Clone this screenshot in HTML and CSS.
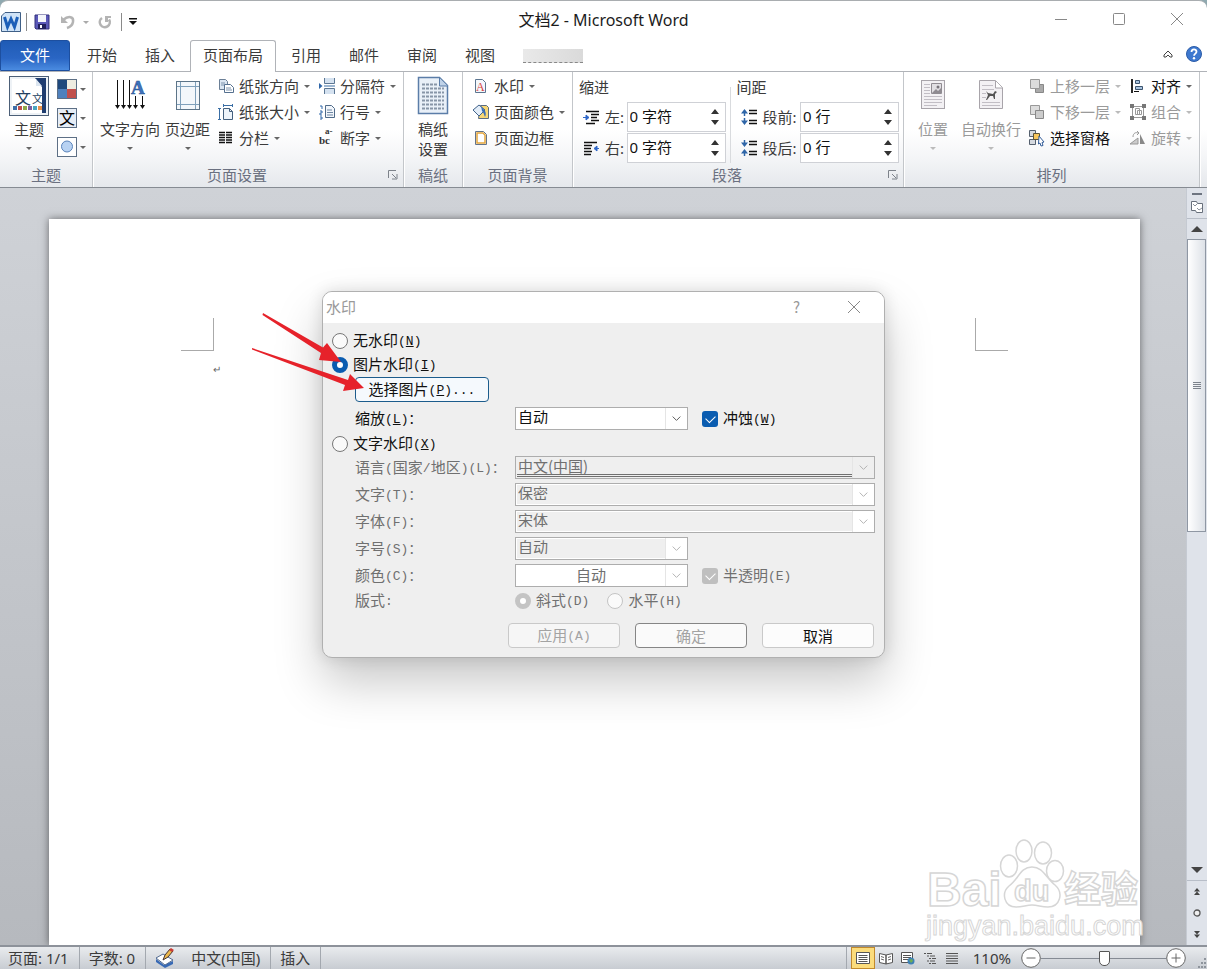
FILE: index.html
```html
<!DOCTYPE html>
<html lang="zh-CN">
<head>
    <meta charset="UTF-8">
    <meta name="viewport" content="width=device-width, initial-scale=1.0">
    <title>文档2 - Microsoft Word</title>
    <link rel="stylesheet" href="styles.css">
</head>
<body>
    <div class="window">
        <header class="titlebar">
            <div class="quick-access">
                <svg class="app-icon" width="20" height="20" viewBox="0 0 20 20"><path d="M4 .5h15.500v19H.5V4z" fill="#cfe3f7" stroke="#3f5f86"/><path d="M3.500 5l3 10L10 7l3.500 8 3-10" fill="none" stroke="#1c5fb8" stroke-width="3"/></svg>
                <span class="bar"></span>
                <button type="button" title="保存"><svg width="16" height="16" viewBox="0 0 16 16"><path d="M1 1h14v14H2l-1-1z" fill="#5a58b8" stroke="#33317c"/><path d="M4 1h8v7H4z" fill="#f4f6fb"/><path d="M4 10h8v5H4z" fill="#20205c"/><path d="M6 11h2v3H6z" fill="#fff"/></svg></button>
                <button type="button" title="撤消" class="undo"><svg width="16" height="16" viewBox="0 0 16 16"><path d="M3 6c6-5 11-3 10 2-.5 3-3 5-6 6" fill="none" stroke="#b4b4b4" stroke-width="2.500"/><path d="M1 2v7h7z" fill="#b4b4b4"/></svg></button>
                <i class="caret dim"></i>
                <button type="button" title="重复" class="redo"><svg width="14" height="14" viewBox="0 0 14 14"><path d="M4 3a5 5 0 1 0 7 1.500" fill="none" stroke="#b4b4b4" stroke-width="2.600"/><path d="M7 1h6v2h-3v4H7z" fill="#b4b4b4"/></svg></button>
                <span class="bar"></span>
                <button type="button" title="自定义快速访问工具栏" class="customize"><svg width="8" height="8" viewBox="0 0 8 8"><path d="M0 0h8v1.500H0zM0 3h8L4 7z" fill="#111"/></svg></button>
            </div>
            <h1>文档2 - Microsoft Word</h1>
            <div class="window-buttons">
                <button type="button" aria-label="最小化"><svg width="14" height="14" viewBox="0 0 14 14"><path d="M1 7.500h12"/></svg></button>
                <button type="button" aria-label="最大化"><svg width="14" height="14" viewBox="0 0 14 14"><rect x="1.500" y="1.500" width="11" height="11" rx="1"/></svg></button>
                <button type="button" aria-label="关闭"><svg width="14" height="14" viewBox="0 0 14 14"><path d="M1 1l12 12M13 1L1 13"/></svg></button>
            </div>
        </header>

        <nav class="tabs">
            <button type="button" class="tab-file">文件</button>
            <button type="button">开始</button>
            <button type="button">插入</button>
            <button type="button" class="active">页面布局</button>
            <button type="button">引用</button>
            <button type="button">邮件</button>
            <button type="button">审阅</button>
            <button type="button">视图</button>
            <span class="hidden-tab"></span>
            <div class="tab-tools">
                <svg width="10" height="8" viewBox="0 0 10 8"><path d="M1 5l4-4 4 4v2H7L5 5 3 7H1z" fill="#fff" stroke="#444"/></svg>
                <svg width="16" height="16" viewBox="0 0 16 16"><circle cx="8" cy="8" r="7.500" fill="#3d78cf" stroke="#2c5ca8"/><path d="M5.500 6c0-3.500 5-3.300 5-.3 0 2-2.400 1.800-2.400 4" fill="none" stroke="#fff" stroke-width="1.800"/><circle cx="8" cy="12.300" r="1.200" fill="#fff"/></svg>
            </div>
        </nav>

        <section class="ribbon">
            <div class="group group-theme">
                <div class="group-body">
                    <button type="button" class="big">
                        <svg width="40" height="40" viewBox="0 0 40 40"><rect x=".5" y=".5" width="39" height="39" fill="#eef2f6" stroke="#4c5f77"/><path d="M3 3h25l9 9v25H3z" fill="#fff"/><path d="M26 2l7 9v26h4V2z" fill="#1f3d70"/><path d="M27 3v7h6z" fill="#dbe5f0"/><text x="6" y="28" font-size="16" font-family="Noto Sans CJK SC" fill="#233f61">文</text><text x="23" y="27" font-size="11" font-family="Noto Sans CJK SC" fill="#233f61">文</text><path d="M4 30h4v4H4z" fill="#3f6fa8"/><path d="M9 30h4v4H9z" fill="#c0504d"/><path d="M14 30h4v4h-4z" fill="#8da848"/><path d="M19 30h4v4h-4z" fill="#7a5fa0"/><path d="M24 30h4v4h-4z" fill="#4aa5bf"/><path d="M29 30h4v4h-4z" fill="#e8924a"/></svg>
                        <span>主题</span>
                        <i class="caret"></i>
                    </button>
                    <div class="theme-tools">
                        <button type="button" aria-label="颜色"><svg width="20" height="20" viewBox="0 0 20 20"><rect x=".5" y=".5" width="19" height="19" fill="#fff" stroke="#5d6f85"/><path d="M1 1h9v9H1z" fill="#1f497d"/><path d="M10 1h9v9h-9z" fill="#eeece1"/><path d="M1 10h9v9H1z" fill="#4f81bd"/><path d="M10 10h9v9h-9z" fill="#c0504d"/></svg><i class="caret"></i></button>
                        <button type="button" aria-label="字体"><svg width="20" height="20" viewBox="0 0 20 20"><rect x=".5" y=".5" width="19" height="19" fill="#e6edf6" stroke="#5d6f85"/><text x="2" y="16" font-size="16" font-family="Noto Sans CJK SC">文</text></svg><i class="caret"></i></button>
                        <button type="button" aria-label="效果"><svg width="20" height="20" viewBox="0 0 20 20"><rect x=".5" y=".5" width="19" height="19" fill="#fff" stroke="#5d6f85"/><circle cx="10" cy="9.500" r="5.500" fill="#b8d2f2" stroke="#5b84bb"/></svg><i class="caret"></i></button>
                    </div>
                </div>
                <h2>主题</h2>
            </div>

            <div class="group group-setup">
                <div class="group-body">
                    <button type="button" class="big">
                        <svg width="32" height="40" viewBox="0 0 32 40"><path d="M3.500 4v27M9.500 4v27M15.500 4v27M21.500 20v11M28.500 20v11" stroke="#111"/><path d="M1 29h5l-2.500 4zM7 29h5l-2.500 4zM13 29h5l-2.500 4zM19 29h5l-2.500 4zM26 29h5l-2.500 4z" fill="#111"/><text x="17" y="18" font-family="Liberation Serif" font-weight="bold" font-size="19" fill="#3f74bd" stroke="#244f8d" stroke-width=".5">A</text></svg>
                        <span>文字方向</span>
                        <i class="caret"></i>
                    </button>
                    <button type="button" class="big">
                        <svg width="26" height="40" viewBox="0 0 26 40"><rect x="1.500" y="5.500" width="23" height="28" fill="#f3f7fb" stroke="#5c7488"/><path d="M5.500 6v27M20.500 6v27M2 10.500h22M2 28.500h22" stroke="#7fa0bb"/></svg>
                        <span>页边距</span>
                        <i class="caret"></i>
                    </button>
                    <div class="stack stack-paper">
                        <button type="button"><svg width="16" height="16" viewBox="0 0 16 16"><path d="M1.500 1.500h6l2 2v8h-8z" fill="#dbe6f2" stroke="#6b7f96"/><path d="M6.500 6.500h6l3 3v5h-9z" fill="#fff" stroke="#55708f"/><path d="M3 5h4M3 7h3M8 10h5M8 12h6" stroke="#7c93ad"/></svg>纸张方向<i class="caret"></i></button>
                        <button type="button"><svg width="16" height="16" viewBox="0 0 16 16"><path d="M5.500 4.500h6l3 3v8h-9z" fill="#eef4fa" stroke="#44607e"/><path d="M11.500 4.500v3h3" fill="none" stroke="#44607e"/><path d="M1.500 4v11M0 4.500h3M0 15.500h3M5 1.500h10M5.500 0v3M14.500 0v3" stroke="#3a6ea5"/></svg>纸张大小<i class="caret"></i></button>
                        <button type="button"><svg width="16" height="16" viewBox="0 0 16 16"><path d="M1 2.500h6M1 5h6M1 7.500h6M1 10h6M1 12.500h6M8 2.500h6M8 5h6M8 7.500h6M8 10h6M8 12.500h6" stroke="#111" stroke-width="1.300"/></svg>分栏<i class="caret"></i></button>
                    </div>
                    <div class="stack">
                        <button type="button"><svg width="16" height="16" viewBox="0 0 16 16"><path d="M5.500 0v5.500h10V0M5.500 16v-5.500h10V16" fill="#d5e2f0" stroke="#5c7794"/><path d="M5 8h11" stroke="#3a6ea5"/><path d="M0 5l3.500 3L0 11z" fill="#2f66a8"/></svg>分隔符<i class="caret"></i></button>
                        <button type="button"><svg width="16" height="16" viewBox="0 0 16 16"><path d="M6.500 1.500h6l3 3v9h-9z" fill="#f2f6fb" stroke="#4f6a88"/><path d="M8 6h5M8 8.500h6M8 11h6" stroke="#6e87a3"/><path d="M1 2h2v3M1 7h2v2H1v2h2M1 13h2v2H1" fill="none" stroke="#2f66a8"/></svg>行号<i class="caret"></i></button>
                        <button type="button"><svg width="16" height="16" viewBox="0 0 16 16"><text x="0" y="14" font-family="Liberation Serif" font-size="11" font-weight="bold" fill="#333">bc</text><text x="6" y="4" font-family="Liberation Serif" font-size="9" font-weight="bold" fill="#333">a-</text></svg>断字<i class="caret"></i></button>
                    </div>
                </div>
                <h2 class="has-launcher">页面设置</h2>
                <svg class="launcher" width="10" height="10" viewBox="0 0 10 10"><path d="M.5 8V.5H8M4 4l4 4M9 4v5H4" fill="none" stroke="#7d828a"/></svg>
            </div>

            <div class="group group-draft">
                <div class="group-body">
                    <button type="button" class="big">
                        <svg width="32" height="40" viewBox="0 0 32 40"><path d="M1.500 1.500h21l8 8v28h-29z" fill="#e9f0f8" stroke="#5b7da8" stroke-width="1.500"/><path d="M22.500 2v8h8" fill="#bfd2e8" stroke="#5b7da8"/><g fill="none" stroke="#8795a7"><path d="M5 8.500h16M5 12.500h22M5 16.500h22M5 20.500h22M5 24.500h22M5 28.500h22M5 32.500h22" stroke-dasharray="3 1" stroke-width="2"/></g></svg>
                        <span>稿纸<br>设置</span>
                    </button>
                </div>
                <h2>稿纸</h2>
            </div>

            <div class="group group-background">
                <div class="group-body">
                    <div class="stack">
                        <button type="button"><svg width="16" height="16" viewBox="0 0 16 16"><path d="M2.500 1.500h7l3 3v10h-10z" fill="#f4f7fb" stroke="#5c7590"/><text x="3" y="13" font-family="Liberation Serif" font-size="12" fill="#d43c3c">A</text></svg>水印<i class="caret"></i></button>
                        <button type="button"><svg width="16" height="16" viewBox="0 0 16 16"><path d="M7.500 1.500h6l2 2v11h-10z" fill="#f7d674" stroke="#5b6c80"/><path d="M0 6l6-5 6 5-6 6z" fill="#e3edf8" stroke="#41638b"/><path d="M8 2l4 5c1 2 1 4 0 6-1-2-1-4-3-6z" fill="#3a6eb5"/></svg>页面颜色<i class="caret"></i></button>
                        <button type="button"><svg width="16" height="16" viewBox="0 0 16 16"><path d="M2.500 1.500h8l3 3v10h-11z" fill="#fff" stroke="#62738a"/><path d="M4 3h6l2 2v8H4z" fill="none" stroke="#e3a53b" stroke-width="1.500"/></svg>页面边框</button>
                    </div>
                </div>
                <h2>页面背景</h2>
            </div>

            <div class="group group-paragraph">
                <div class="group-body">
                    <fieldset class="spin-set indent">
                        <legend>缩进</legend>
                        <div class="spin-row">
                            <svg width="17" height="16" viewBox="0 0 17 16"><path d="M3 2.500h13M8 5.500h8M8 8.500h6M8 11.500h8M3 14.500h9" stroke="#111" stroke-width="1.500"/><path d="M0 8.500h5M3 6l3 2.500L3 11z" fill="#2f66c8" stroke="#2f66c8"/></svg>
                            <label for="indent-left">左:</label>
                            <span class="spin"><input type="text" id="indent-left" value="0 字符"><svg width="10" height="18" viewBox="0 0 10 18"><path d="M1 6h8L5 1zM1 12h8l-4 5z" fill="#333"/></svg></span>
                        </div>
                        <div class="spin-row">
                            <svg width="17" height="16" viewBox="0 0 17 16"><path d="M1 2.500h13M1 5.500h8M1 8.500h7M1 11.500h8M1 14.500h7" stroke="#111" stroke-width="1.500"/><path d="M12 8.500h4M14 6l-3 2.500L14 11z" fill="#2f66c8" stroke="#2f66c8"/></svg>
                            <label for="indent-right">右:</label>
                            <span class="spin"><input type="text" id="indent-right" value="0 字符"><svg width="10" height="18" viewBox="0 0 10 18"><path d="M1 6h8L5 1zM1 12h8l-4 5z" fill="#333"/></svg></span>
                        </div>
                    </fieldset>
                    <fieldset class="spin-set spacing">
                        <legend>间距</legend>
                        <div class="spin-row">
                            <svg width="17" height="18" viewBox="0 0 17 18"><path d="M8 2.500h8M8 5.500h8M8 12.500h8M8 15.500h8" stroke="#111" stroke-width="1.500"/><path d="M3.500 8V3M3.500 10v5" stroke="#2f66a8" stroke-width="1.500"/><path d="M0 5.500h7L3.500 1zM0 12.500h7L3.500 17z" fill="#2f66a8"/></svg>
                            <label for="space-before">段前:</label>
                            <span class="spin"><input type="text" id="space-before" value="0 行"><svg width="10" height="18" viewBox="0 0 10 18"><path d="M1 6h8L5 1zM1 12h8l-4 5z" fill="#333"/></svg></span>
                        </div>
                        <div class="spin-row">
                            <svg width="17" height="18" viewBox="0 0 17 18"><path d="M8 2.500h8M8 5.500h8M8 12.500h8M8 15.500h8" stroke="#111" stroke-width="1.500"/><path d="M3.500 1v4M3.500 13v4" stroke="#2f66a8" stroke-width="1.500"/><path d="M0 3.500h7L3.500 8zM0 14.500h7L3.500 10z" fill="#2f66a8"/></svg>
                            <label for="space-after">段后:</label>
                            <span class="spin"><input type="text" id="space-after" value="0 行"><svg width="10" height="18" viewBox="0 0 10 18"><path d="M1 6h8L5 1zM1 12h8l-4 5z" fill="#333"/></svg></span>
                        </div>
                    </fieldset>
                </div>
                <h2 class="has-launcher">段落</h2>
                <svg class="launcher" width="10" height="10" viewBox="0 0 10 10"><path d="M.5 8V.5H8M4 4l4 4M9 4v5H4" fill="none" stroke="#7d828a"/></svg>
            </div>

            <div class="group group-arrange">
                <div class="group-body">
                    <button type="button" class="big" disabled>
                        <svg width="26" height="40" viewBox="0 0 26 40"><rect x="1.500" y="4.500" width="23" height="28" fill="#f3f1f4" stroke="#a8a4aa"/><path d="M4 8.500h6M4 11.500h6M4 14.500h6M4 17.500h6M4 20.500h18M4 23.500h18M4 26.500h18M4 29.500h13" stroke="#c2bec5"/><path d="M11.500 7.500h10v10h-10z" fill="#e1dfe3" stroke="#908c92"/><path d="M12 17l4-4 2 2 3-3v5z" fill="#8f8b91"/><circle cx="18" cy="11" r="1.500" fill="#77737a"/></svg>
                        <span>位置</span>
                        <i class="caret"></i>
                    </button>
                    <button type="button" class="big" disabled>
                        <svg width="26" height="40" viewBox="0 0 26 40"><path d="M1.500 4.500h16l7 7v21h-23z" fill="#f3f1f4" stroke="#a8a4aa"/><path d="M17.500 5v7h7" fill="#fff" stroke="#a8a4aa"/><path d="M4 9.500h11M4 13.500h12M4 17.500h4M4 21.500h4M4 26.500h18M4 29.500h18" stroke="#c2bec5"/><path d="M8 15l2 2 5 1 2-3 2 1-2 2v5h-1l-1-3h-3l-3 4H8l2-5z" fill="#555"/></svg>
                        <span>自动换行</span>
                        <i class="caret"></i>
                    </button>
                    <div class="stack stack-layer">
                        <button type="button" disabled><svg width="16" height="16" viewBox="0 0 16 16"><path d="M6.500 6.500h8v8h-8z" fill="#aaa" stroke="#888"/><path d="M1.500 1.500h9v9h-9z" fill="#dcdcdc" stroke="#999"/></svg>上移一层<i class="caret"></i></button>
                        <button type="button" disabled><svg width="16" height="16" viewBox="0 0 16 16"><path d="M1.500 1.500h9v9h-9z" fill="#ddd" stroke="#999"/><path d="M6.500 6.500h8v8h-8z" fill="#ccc" stroke="#888"/></svg>下移一层<i class="caret"></i></button>
                        <button type="button" class="dark"><svg width="16" height="16" viewBox="0 0 16 16"><path d="M.5.5h6v6h-6zM.5 9.500h6v5h-6z" fill="#d5d9df" stroke="#55606e"/><path d="M4.500 3.500h6v6h-6z" fill="#f7c65b" stroke="#5c5338"/><path d="M10 6l5 6-2 .5 1 3-2 .5-1-3-1.500 1z" fill="#fff" stroke="#345d99"/></svg>选择窗格</button>
                    </div>
                    <div class="stack">
                        <button type="button" class="dark"><svg width="16" height="16" viewBox="0 0 16 16"><path d="M2 1v14" stroke="#111" stroke-width="1.800"/><path d="M5.500 2.500h4v3h-4zM5.500 8.500h7v3h-7z" fill="#a9c3df" stroke="#3d556f"/><path d="M4 13.500h5" stroke="#111"/></svg>对齐<i class="caret"></i></button>
                        <button type="button" disabled><svg width="16" height="16" viewBox="0 0 16 16"><path d="M2.500 2.500h11v11h-11zM5.500 4.500h4v6h-4zM7.500 6.500h4v4h-4z" fill="none" stroke="#999"/><path d="M0 0h4v4H0zM12 0h4v4h-4zM0 12h4v4H0zM12 12h4v4h-4z" fill="#777"/></svg>组合<i class="caret"></i></button>
                        <button type="button" disabled><svg width="16" height="16" viewBox="0 0 16 16"><path d="M0 14l8-6v6z" fill="#ccc" stroke="#999"/><path d="M10 14V4l5 10z" fill="#888"/><path d="M3 7c0-4 3-5 5-4M7 1l2 2-2 2" fill="none" stroke="#999"/></svg>旋转<i class="caret"></i></button>
                    </div>
                </div>
                <h2>排列</h2>
            </div>
            <div class="ribbon-end"></div>
        </section>

        <main class="workspace">
            <div class="canvas">
                <article class="page">
                    <div class="margin-marks"><span class="mark-left"></span><span class="mark-right"></span></div>
                    <p>↵</p>
                </article>
            </div>
            <aside class="scrollbar">
                <div class="ruler-toggle"><svg width="14" height="14" viewBox="0 0 14 14"><path d="M1.500 1.500h5l1 2h5v9h-6l-1-2h-4z" fill="#fff" stroke="#676f7b"/><path d="M3 4l2 2 2-2M7 8l2 2 3-2" fill="none" stroke="#8a919b"/></svg></div>
                <button type="button" class="scroll-up" aria-label="向上滚动"><svg width="12" height="6" viewBox="0 0 12 6"><path d="M0 6l6-6 6 6z" fill="#444"/></svg></button>
                <div class="thumb"><span></span></div>
                <button type="button" class="scroll-down" aria-label="向下滚动"><svg width="12" height="6" viewBox="0 0 12 6"><path d="M0 0h12L6 6z" fill="#444"/></svg></button>
                <div class="browse">
                    <svg width="8" height="8" viewBox="0 0 8 8"><path d="M1 3.500L4 0l3 3.500zM1 7l3-3.500L7 7z" fill="#444"/></svg>
                    <svg width="8" height="8" viewBox="0 0 8 8"><circle cx="4" cy="4" r="3" fill="#eee" stroke="#555" stroke-width="1.300"/></svg>
                    <svg width="8" height="8" viewBox="0 0 8 8"><path d="M1 4.500L4 8l3-3.500zM1 1l3 3.500L7 1z" fill="#444"/></svg>
                </div>
            </aside>
        </main>

        <footer class="statusbar">
            <span class="status-item">页面: 1/1</span>
            <span class="status-item">字数: 0</span>
            <span class="status-item language"><svg width="20" height="20" viewBox="0 0 20 20"><path d="M1 11l8 6 9-4v3l-8 4-9-6z" fill="#3769b5"/><path d="M1 10l7-4 10 6-8 5z" fill="#fff" stroke="#526b91"/><path d="M8 12l2-5 5-6 3 2-5 6z" fill="#ecb84b" stroke="#433"/><path d="M14 2l2-2 3 2-2 2z" fill="#ca3d36"/></svg>中文(中国)</span>
            <span class="status-item">插入</span>
            <div class="views">
                <button type="button" class="current" aria-label="页面视图"><svg width="14" height="14" viewBox="0 0 14 14"><path d="M.5 1.500h13v11H.5z" fill="#fff" stroke="#555"/><path d="M2.500 4.500h9M2.500 6.500h9M2.500 8.500h9M2.500 10.500h9" stroke="#555"/></svg></button>
                <button type="button" aria-label="阅读版式"><svg width="14" height="14" viewBox="0 0 14 14"><path d="M.5 2.500L7 4v9L.500 11.500zM13.500 2.500L7 4v9l6.500-1.500z" fill="#fff" stroke="#555"/><path d="M2 5.500l3 1M2 8l3 1M12 5.500l-3 1M12 8l-3 1" stroke="#666"/></svg></button>
                <button type="button" aria-label="Web 版式"><svg width="14" height="14" viewBox="0 0 14 14"><path d="M.5 1.500h11v10H.5z" fill="#fff" stroke="#555"/><path d="M2 4.500h8M2 6.500h8M2 8.500h5" stroke="#555"/><circle cx="10" cy="10" r="3.500" fill="#3e80b5"/><path d="M8 9l3-1 1 2-2 2z" fill="#6fae54"/></svg></button>
                <button type="button" aria-label="大纲"><svg width="14" height="14" viewBox="0 0 14 14"><path d="M1 2.500h8M4 5h8M6 7.500h7M4 10h8M6 12.500h7" stroke="#555" stroke-dasharray="2 1 9 0"/></svg></button>
                <button type="button" aria-label="草稿"><svg width="14" height="14" viewBox="0 0 14 14"><path d="M1 2.500h12M1 5h12M1 7.500h12M1 10h12M1 12.500h12" stroke="#555"/></svg></button>
            </div>
            <div class="zoom">
                <label for="zoom-range">110%</label>
                <button type="button" aria-label="缩小"><svg width="20" height="20" viewBox="0 0 20 20"><circle cx="10" cy="10" r="9.300"/><path d="M5.500 10h9"/></svg></button>
                <input type="range" id="zoom-range" min="0" max="100" value="51">
                <button type="button" aria-label="放大"><svg width="20" height="20" viewBox="0 0 20 20"><circle cx="10" cy="10" r="9.300"/><path d="M5.500 10h9M10 5.500v9"/></svg></button>
            </div>
            <svg class="grip" width="10" height="12" viewBox="0 0 10 12"><path d="M7 1h2v2H7zM4 5h2v2H4zM7 5h2v2H7zM1 9h2v2H1zM4 9h2v2H4zM7 9h2v2H7z" fill="#8e949c"/></svg>
        </footer>
    </div>

    <svg class="watermark" width="220" height="108" viewBox="0 0 220 108" aria-hidden="true">
        <g fill="#fff" stroke="#d6d6d6" stroke-width="1.500">
            <text x="2" y="68" font-family="Liberation Sans" font-weight="bold" font-size="48">Bai</text>
            <ellipse cx="84" cy="28" rx="8.500" ry="11"/>
            <ellipse cx="99" cy="13" rx="8" ry="11"/>
            <ellipse cx="118" cy="15" rx="8.500" ry="11"/>
            <ellipse cx="130" cy="33" rx="8.500" ry="10.500"/>
            <path d="M107 29c-12 0-13 12-23 19-8 7-5 21 7 21 7 0 10-2 16-2s9 2 16 2c12 0 16-14 7-22-9-7-12-18-23-18z"/>
            <text x="89" y="63" font-family="Liberation Sans" font-weight="bold" font-size="29">du</text>
            <text x="139" y="65" font-family="Noto Sans CJK SC" font-weight="bold" font-size="37">经验</text>
            <text x="1" y="97" font-family="Liberation Sans" font-size="27" stroke-width="1">jingyan.baidu.com</text>
        </g>
    </svg>

    <div class="overlay">
        <form class="dialog" role="dialog" aria-label="水印">
            <div class="dialog-title">
                <span>水印</span>
                <button type="button" aria-label="帮助">?</button>
                <button type="button" aria-label="关闭"><svg width="14" height="14" viewBox="0 0 14 14"><path d="M1 1l12 12M13 1L1 13" stroke="#888"/></svg></button>
            </div>
            <div class="dialog-body">
                <label class="option"><input type="radio" name="kind"><span>无水印<span class="key">(<u>N</u>)</span></span></label>
                <label class="option"><input type="radio" name="kind" checked><span>图片水印<span class="key">(<u>I</u>)</span></span></label>
                <button type="button" class="btn pick">选择图片<span class="key">(<u>P</u>)...</span></button>
                <div class="field scale">
                    <label for="scale">缩放<span class="key">(<u>L</u>)：</span></label>
                    <span class="combo short"><select id="scale"><option>自动</option></select><svg viewBox="0 0 22 20"><path d="M7 8l4 4 4-4"/></svg></span>
                    <label class="check"><input type="checkbox" checked><span>冲蚀<span class="key">(<u>W</u>)</span></span></label>
                </div>
                <label class="option"><input type="radio" name="kind"><span>文字水印<span class="key">(<u>X</u>)</span></span></label>
                <div class="fields">
                    <div class="field">
                        <label for="lang">语言<span class="key">(</span>国家<span class="key">/</span>地区<span class="key">)(L)：</span></label>
                        <span class="combo flat"><select id="lang" disabled><option>中文(中国)</option></select><svg viewBox="0 0 22 20"><path d="M7 8l4 4 4-4"/></svg></span>
                    </div>
                    <div class="field">
                        <label for="text">文字<span class="key">(T)：</span></label>
                        <span class="combo"><select id="text" disabled><option>保密</option></select><svg viewBox="0 0 22 20"><path d="M7 8l4 4 4-4"/></svg></span>
                    </div>
                    <div class="field">
                        <label for="font">字体<span class="key">(F)：</span></label>
                        <span class="combo"><select id="font" disabled><option>宋体</option></select><svg viewBox="0 0 22 20"><path d="M7 8l4 4 4-4"/></svg></span>
                    </div>
                    <div class="field">
                        <label for="size">字号<span class="key">(S)：</span></label>
                        <span class="combo short"><select id="size" disabled><option>自动</option></select><svg viewBox="0 0 22 20"><path d="M7 8l4 4 4-4"/></svg></span>
                    </div>
                    <div class="field">
                        <label for="color">颜色<span class="key">(C)：</span></label>
                        <span class="combo short color"><select id="color" disabled><option>自动</option></select><svg viewBox="0 0 22 20"><path d="M7 8l4 4 4-4"/></svg></span>
                        <label class="check"><input type="checkbox" checked disabled><span>半透明<span class="key">(E)</span></span></label>
                    </div>
                </div>
                <div class="field layout">
                    <span class="field-label">版式<span class="key">:</span></span>
                    <label class="option"><input type="radio" name="layout" checked disabled><span>斜式<span class="key">(D)</span></span></label>
                    <label class="option"><input type="radio" name="layout" disabled><span>水平<span class="key">(H)</span></span></label>
                </div>
                <div class="actions">
                    <button type="button" class="btn" disabled>应用<span class="key">(A)</span></button>
                    <button type="submit" class="btn default" disabled>确定</button>
                    <button type="button" class="btn">取消</button>
                </div>
            </div>
            <svg class="pointers" width="120" height="90" viewBox="0 0 120 90">
                <path d="M13 3L12.500 5 71 43l-2 7 22 2-14-19-4 4.500z" fill="#e6222a"/>
                <path d="M2 38v1.500L95 75l-2 6 21-3-14-14-2 6z" fill="#e6222a"/>
            </svg>
        </form>
    </div>
</body>
</html>
```
FILE: styles.css
```css
* {
    box-sizing: border-box;
}
body {
    margin: 0;
    background-color: #8fa9b0;
    color: #3b3b3b;
    font-family: "Noto Sans", "Noto Sans CJK SC", sans-serif;
    font-size: 15px;
    line-height: 20px;
}
button {
    font: inherit;
    color: inherit;
    background: none;
    border: none;
    padding: 0;
}
svg {
    display: block;
    flex: none;
    overflow: visible;
}
h1, h2, p {
    margin: 0;
    font-weight: normal;
}
.window {
    display: flex;
    flex-direction: column;
    height: 100vh;
    overflow: hidden;
    background-color: #fff;
    border-top: 1px solid #a9adb0;
    border-radius: 8px 8px 0 0;
}
.caret {
    width: 0;
    height: 0;
    border: 3px solid transparent;
    border-top-color: #666;
    border-bottom-width: 0;
}
.caret.dim {
    border-top-color: #aaa;
}

/* title bar */
.titlebar {
    display: grid;
    grid-template-columns: 1fr auto 1fr;
    align-items: center;
    height: 39px;
    flex: none;
}
.titlebar h1 {
    padding-bottom: 2px;
    font-size: 16px;
    color: #1c1c1c;
}
.quick-access {
    display: flex;
    align-items: center;
    padding: 3px 0 0 1px;
}
.quick-access .bar {
    width: 1px;
    height: 18px;
    margin: 0 7px 0 5px;
    background-color: #8a8a8a;
}
.quick-access .undo {
    margin: 0 7px 0 10px;
}
.quick-access .redo {
    margin: 0 4px 0 9px;
}
.window-buttons {
    display: flex;
    justify-content: flex-end;
    padding-right: 1px;
}
.window-buttons button {
    display: grid;
    place-items: center;
    width: 58px;
    height: 36px;
    padding-bottom: 4px;
}
.window-buttons svg {
    fill: none;
    stroke: #888;
}

/* tabs */
.tabs {
    display: flex;
    height: 31px;
    flex: none;
}
.tabs button {
    padding: 0 14px 2px;
}
.tabs .tab-file {
    width: 70px;
    margin-right: 3px;
    color: #fff;
    border: 1px solid #1d4f9f;
    border-radius: 3px 3px 0 0;
    background: linear-gradient(#1f5bb5, #2a66c4 60%, #4a8be0);
}
.tabs .active {
    position: relative;
    z-index: 1;
    height: 32px;
    padding: 0 12px 3px;
    margin: 0 1px;
    border: 1px solid #b0b3b8;
    border-bottom: none;
    border-radius: 3px 3px 0 0;
    background-color: #fff;
}
.hidden-tab {
    align-self: center;
    width: 60px;
    height: 14px;
    margin-left: 14px;
    background: linear-gradient(90deg, #e9e9e9, #dadada);
    border-bottom: 1px dashed #888;
}
.tab-tools {
    display: flex;
    align-items: center;
    gap: 13px;
    margin-left: auto;
    padding: 0 5px 3px 0;
}

/* ribbon */
.ribbon {
    display: flex;
    flex: none;
    height: 117px;
    border-top: 1px solid #b0b3b8;
    border-bottom: 1px solid #868b92;
    background: linear-gradient(#fff 50%, #f4f5f7 75%, #e5e8ec);
}
.group {
    position: relative;
    display: flex;
    flex-direction: column;
    flex: none;
    border-right: 1px solid #c3c6ca;
    box-shadow: 1px 0 #fff;
}
.group-body {
    display: flex;
    flex: 1;
    min-height: 0;
    padding-top: 1px;
}
.group h2 {
    flex: none;
    height: 24px;
    font-size: 15px;
    line-height: 24px;
    text-align: center;
    color: #6a7080;
}
.group .has-launcher {
    padding-right: 22px;
}
.launcher {
    position: absolute;
    right: 5px;
    bottom: 7px;
}
.group button {
    white-space: nowrap;
}
.group .dark {
    color: #111;
}
.group button:disabled {
    color: #9a9a9a;
}
.group button:disabled .caret {
    border-top-color: #bbb;
}
.big {
    display: flex;
    flex-direction: column;
    align-items: center;
    padding-top: 3px;
}
.big span {
    margin: 3px 0 8px;
}
.stack {
    display: flex;
    flex-direction: column;
}
.stack button {
    display: flex;
    align-items: center;
    gap: 5px;
    height: 26px;
}
.group-theme {
    width: 93px;
}
.group-theme .group-body {
    padding-left: 9px;
    gap: 8px;
}
.theme-tools button {
    display: flex;
    align-items: center;
    gap: 3px;
    height: 29px;
    padding-top: 3px;
}
.group-setup {
    width: 311px;
}
.group-setup .group-body {
    padding-left: 7px;
    gap: 5px;
}
.stack-paper {
    margin: 0 4px 0 3px;
}
.group-draft {
    width: 59px;
}
.group-draft .group-body {
    justify-content: center;
}
.group-background {
    width: 110px;
}
.group-background .group-body {
    padding-left: 10px;
}
.group-paragraph {
    width: 331px;
}
.spin-set {
    min-width: 0;
    margin: 0;
    padding: 0 4px 0 6px;
    border: none;
}
.spin-set legend {
    padding: 4px 0;
    height: 28px;
}
.spin-row {
    display: flex;
    align-items: center;
    height: 31px;
}
.spin-row svg {
    margin: 0 5px 0 4px;
}
.spin-row label {
    width: 25px;
}
.indent {
    width: 159px;
    border-right: 1px solid #d9dbde;
}
.spacing .spin-row label {
    width: 39px;
}
.spin {
    position: relative;
}
.spin input {
    display: block;
    width: 99px;
    height: 30px;
    padding: 0 20px 3px 2px;
    border: 1px solid #cfd1d6;
    background-color: #fff;
    color: #111;
    font: inherit;
}
.spin svg {
    position: absolute;
    top: 6px;
    right: 6px;
    margin: 0;
}
.group-arrange {
    flex: 1;
}
.group-arrange .group-body {
    padding-left: 14px;
}
.group-arrange .big + .big {
    margin-left: 13px;
}
.stack-layer {
    margin: 0 9px 0 8px;
}
.ribbon-end {
    width: 7px;
}

/* document */
.workspace {
    display: flex;
    flex: 1;
    min-height: 0;
}
.canvas {
    display: flex;
    flex: 1;
    padding: 31px 46px 0 49px;
    background: linear-gradient(#cfd2d7, #b6b9be);
}
.page {
    flex: 1;
    padding: 99px 132px 0;
    background-color: #fff;
    box-shadow: 0 0 8px rgba(0, 0, 0, 0.5);
}
.margin-marks {
    display: flex;
    justify-content: space-between;
    height: 33px;
}
.margin-marks span {
    width: 33px;
    border-bottom: 1px solid #aaa;
}
.mark-left {
    border-right: 1px solid #aaa;
}
.mark-right {
    border-left: 1px solid #aaa;
}
.page p {
    padding: 8px 32px;
    font-size: 10px;
    color: #666;
}
.scrollbar {
    display: flex;
    flex-direction: column;
    width: 21px;
    border-left: 1px solid #c5cad2;
    background-color: #dfe3ea;
}
.scrollbar button {
    display: grid;
    place-items: center;
    height: 20px;
}
.ruler-toggle {
    display: grid;
    justify-content: center;
    align-content: end;
    height: 31px;
    padding-bottom: 4px;
    border-bottom: 1px solid #b8bec8;
}
.ruler-toggle::before {
    content: "";
    width: 10px;
    height: 2px;
    margin: 0 auto 5px;
    background-color: #6d7480;
}
.thumb {
    display: grid;
    place-items: center;
    height: 293px;
    margin-right: 1px;
    border: 1px solid #8f97a3;
    background: linear-gradient(90deg, #fff, #dde1e7);
}
.thumb span {
    width: 8px;
    height: 7px;
    background: repeating-linear-gradient(#7d838c 0 1px, transparent 1px 2px);
}
.scrollbar .scroll-down {
    margin-top: auto;
}
.browse {
    display: flex;
    flex-direction: column;
    align-items: center;
    justify-content: space-around;
    height: 65px;
    border-top: 1px solid #b8bec8;
}

/* status bar */
.statusbar {
    display: flex;
    align-items: stretch;
    height: 24px;
    flex: none;
    border-top: 2px solid #8d929a;
    background: linear-gradient(#e9ebee, #c8ccd2);
}
.status-item {
    display: flex;
    align-items: center;
    padding: 0 10px 0 9px;
    border-right: 1px solid #a3a8af;
}
.status-item:first-child {
    padding-left: 8px;
}
.language {
    gap: 16px;
}
.views {
    display: flex;
    margin-left: auto;
    padding-left: 4px;
    border-left: 1px solid #a3a8af;
}
.views button {
    display: grid;
    place-items: center;
    width: 22px;
}
.views .current {
    width: 24px;
    border: 1px solid #c28a2c;
    background-color: #fbdc7c;
}
.zoom {
    display: flex;
    align-items: center;
    margin-left: 10px;
}
.zoom label {
    margin-right: 10px;
}
.zoom svg {
    fill: #fff;
    stroke: #666;
}
.zoom input {
    width: 125px;
    height: 20px;
    margin: 0;
    appearance: none;
    background: linear-gradient(#858b94, #858b94) center / 100% 1px no-repeat;
}
.zoom input::-webkit-slider-thumb {
    appearance: none;
    width: 11px;
    height: 15px;
    border: 1px solid #555;
    border-radius: 1px 1px 5px 5px;
    background-color: #fff;
}
.grip {
    align-self: flex-end;
    margin-left: 11px;
}

.watermark {
    position: absolute;
    right: 62px;
    bottom: 23px;
}

/* dialog */
.overlay {
    position: absolute;
    inset: 0;
    display: grid;
    justify-content: center;
    align-content: start;
    padding-top: 291px;
}
.dialog {
    position: relative;
    width: 563px;
    border: 1px solid #b0b0b0;
    border-radius: 10px;
    background-color: #efefef;
    box-shadow: 0 24px 48px rgba(0, 0, 0, 0.22), 0 0 16px rgba(0, 0, 0, 0.12);
    color: #111;
    font-family: "Noto Sans CJK SC", sans-serif;
}
.dialog-title {
    display: flex;
    align-items: center;
    height: 31px;
    padding: 0 2px 2px 3px;
    border-radius: 9px 9px 0 0;
    background-color: #fff;
    color: #999;
}
.dialog-title span {
    margin-right: auto;
}
.dialog-title button {
    display: grid;
    place-items: center;
    width: 57px;
    height: 29px;
}
.dialog-body {
    padding: 6px 9px 9px;
}
.key {
    font-family: "Liberation Mono", "Noto Sans CJK SC", monospace;
    font-size: 13px;
    vertical-align: 1px;
}
.option, .check {
    display: flex;
    align-items: center;
    gap: 5px;
}
.option {
    height: 24px;
}
.check {
    margin-left: 14px;
}
.dialog input {
    position: relative;
    flex: none;
    width: 16px;
    height: 16px;
    margin: 0;
    appearance: none;
    border: 1px solid #777;
    background-color: #fafafa;
}
.dialog input[type="radio"] {
    border-radius: 50%;
}
.dialog input[type="radio"]:checked {
    border: 5px solid #0a5cb0;
    background-color: #fff;
}
.dialog input[type="checkbox"] {
    border: none;
    border-radius: 3px;
    background-color: #0a5cb0;
}
.dialog input[type="checkbox"]::after {
    content: "";
    position: absolute;
    left: 4px;
    top: 4px;
    width: 8px;
    height: 5px;
    border: solid #fff;
    border-width: 0 0 1px 1px;
    transform: rotate(-45deg);
}
.dialog input[type="radio"]:disabled {
    border-color: #c4c4c4;
}
.dialog input[type="checkbox"]:disabled {
    background-color: #bfbfbf;
}
.btn {
    width: 112px;
    height: 25px;
    border: 1px solid #c9c9c9;
    border-radius: 4px;
    background-color: #fcfcfc;
    line-height: 22px;
}
.btn:disabled {
    color: #a3a3a3;
    background-color: #f6f6f6;
}
.btn.default {
    border-color: #858585;
    background-color: #fafafa;
}
.btn.pick {
    display: block;
    width: 134px;
    margin-left: 23px;
    border-color: #1c5c8c;
    background-color: #f5f9fd;
}
.field {
    display: flex;
    align-items: center;
    height: 23px;
    padding-left: 23px;
}
.field > label:first-child, .field-label {
    width: 160px;
    flex: none;
}
.scale {
    margin: 5px 0 2px;
}
.fields {
    display: grid;
    gap: 4px;
}
.fields, .layout {
    color: #707070;
}
.layout {
    height: 24px;
    margin-top: 2px;
}
.layout .option {
    margin-right: 18px;
}
.combo {
    position: relative;
    display: flex;
    flex: 1;
    height: 23px;
    padding: 1px;
    border: 1px solid #adadad;
    background-color: #fff;
}
.combo.short {
    flex: none;
    width: 173px;
}
.combo select {
    flex: 1;
    padding: 0 22px 4px 1px;
    appearance: none;
    border: none;
    border-radius: 0;
    background-color: #fff;
    color: #111;
    font: inherit;
    line-height: 16px;
}
.combo select:disabled {
    background-color: #efefef;
    color: #707070;
    opacity: 1;
}
.combo svg {
    position: absolute;
    top: 0;
    right: 0;
    width: 22px;
    height: 21px;
    fill: none;
    stroke: #555;
    border-left: 1px solid #e5e5e5;
    background-color: #fff;
    pointer-events: none;
}
.combo select:disabled + svg {
    stroke: #b0b0b0;
}
.combo.flat, .combo.flat svg {
    background-color: #efefef;
}
.combo.flat select {
    margin-right: 21px;
    padding-bottom: 0;
    border-bottom: 3px double #707070;
}
.combo.color select {
    padding-bottom: 2px;
    background-color: #fff;
    text-align-last: center;
}
.actions {
    display: flex;
    justify-content: flex-end;
    gap: 15px;
    margin-top: 10px;
    padding-right: 1px;
}
.pointers {
    position: absolute;
    left: -73px;
    top: 18px;
    pointer-events: none;
}
```
